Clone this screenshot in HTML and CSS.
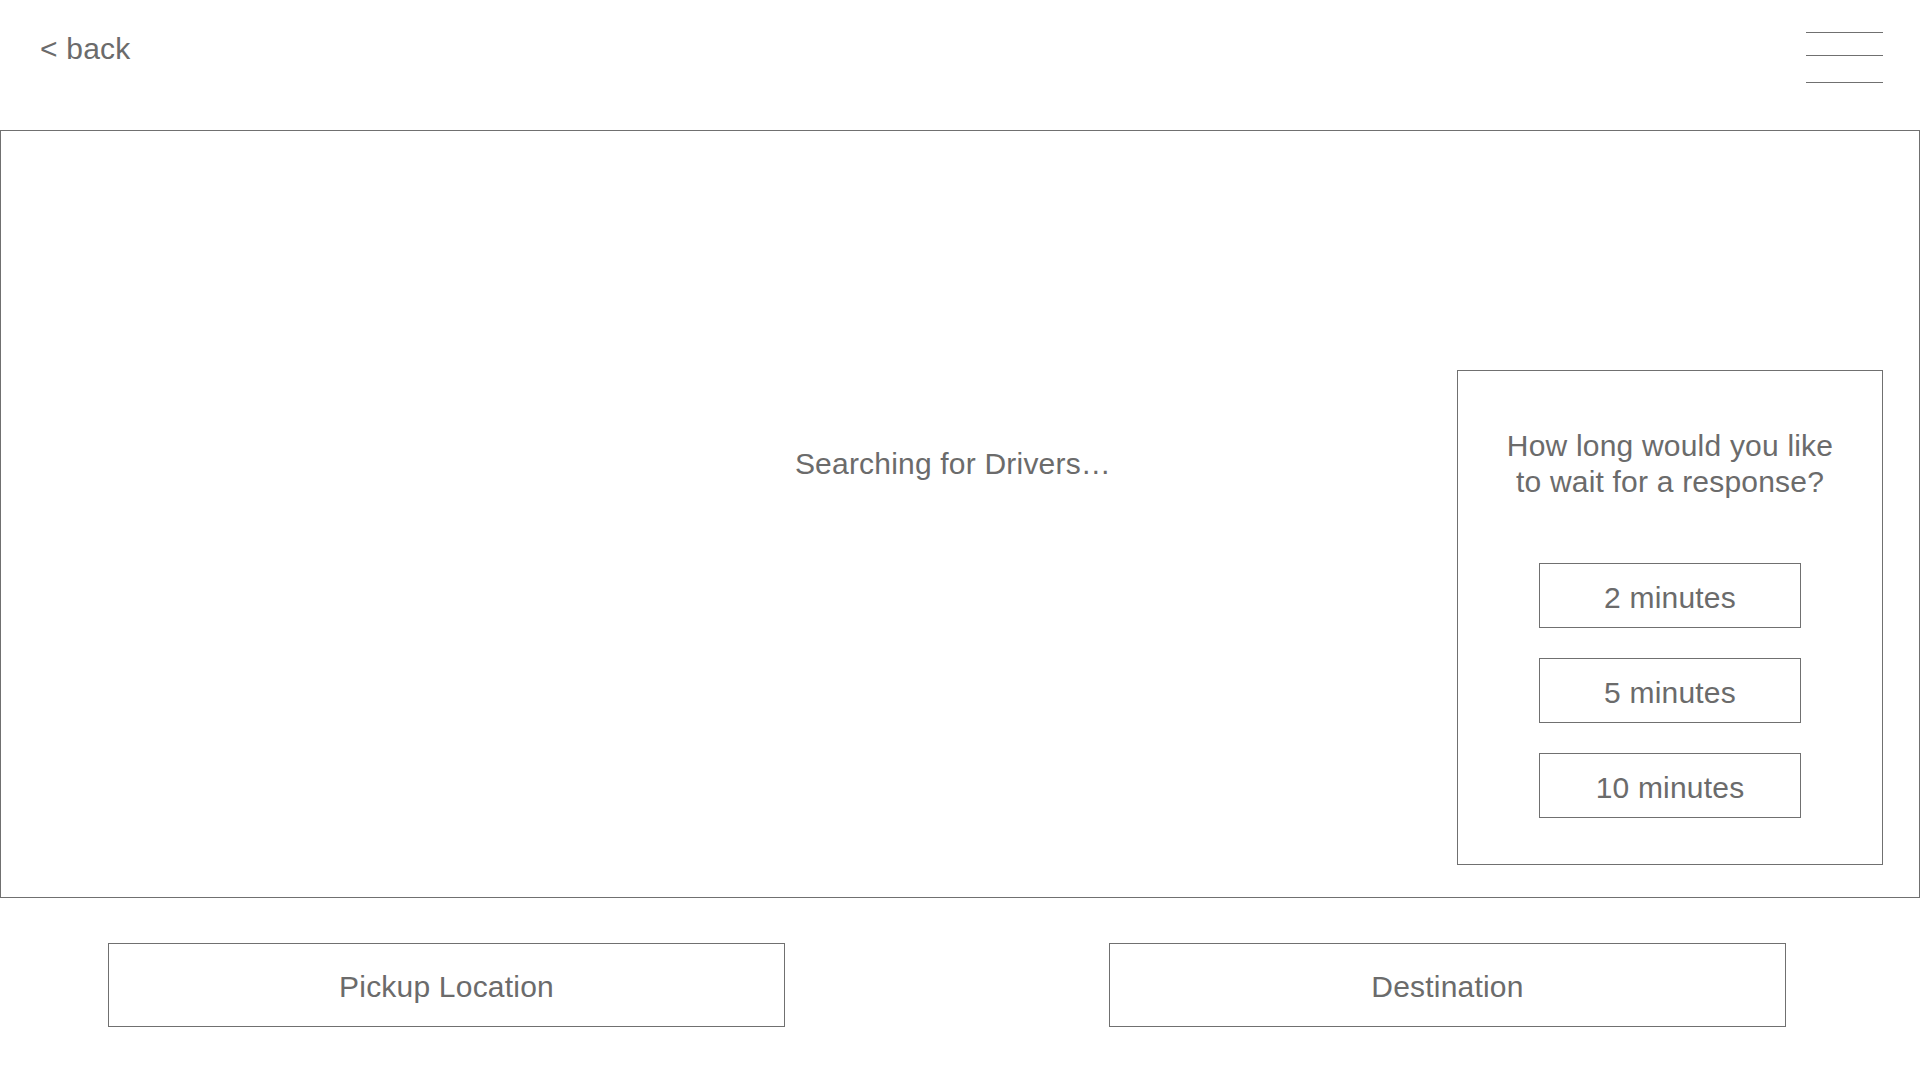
FILE: index.html
```html
<!DOCTYPE html>
<html lang="en">
<head>
<meta charset="utf-8">
<title>Searching for Drivers</title>
<link rel="stylesheet" href="styles.css">
</head>
<body>
  <header class="topbar">
    <a class="back" href="#">&lt; back</a>
    <div class="menu" aria-label="menu">
      <span class="menu-line"></span>
      <span class="menu-line"></span>
      <span class="menu-line"></span>
    </div>
  </header>

  <main class="stage">
    <p class="status">Searching for Drivers…</p>
    <section class="wait-card">
      <p class="wait-question">How long would you like<br>to wait for a response?</p>
      <div class="wait-options">
        <button class="option">2 minutes</button>
        <button class="option">5 minutes</button>
        <button class="option">10 minutes</button>
      </div>
    </section>
  </main>

  <footer class="locations">
    <button class="location">Pickup Location</button>
    <button class="location dest">Destination</button>
  </footer>
</body>
</html>
```

FILE: styles.css
```css
* {
  box-sizing: border-box;
}

html, body {
  margin: 0;
  padding: 0;
  background: #ffffff;
}

body {
  width: 1920px;
  height: 1080px;
  font-family: "Liberation Sans", Arial, Helvetica, sans-serif;
  color: #6b6b6b;
  font-size: 30px;
  letter-spacing: 0.2px;
}

.topbar {
  height: 130px;
  display: flex;
  justify-content: space-between;
  align-items: flex-start;
  padding: 0 37px 0 40px;
}

.back {
  color: #6b6b6b;
  text-decoration: none;
  font-size: 30px;
  line-height: 36px;
  margin-top: 31px;
}

.menu {
  width: 77px;
  margin-top: 32px;
  display: flex;
  flex-direction: column;
}

.menu-line {
  display: block;
  height: 1px;
  background: #707070;
}

.menu-line:nth-child(2) {
  margin-top: 22px;
}

.menu-line:nth-child(3) {
  margin-top: 26px;
}

.stage {
  height: 768px;
  border: 1px solid #707070;
  display: grid;
  grid-template-columns: 1fr;
  grid-template-rows: 1fr;
}

.stage > * {
  grid-area: 1 / 1;
}

.status {
  margin: 315px 0 0 0;
  justify-self: center;
  align-self: start;
  line-height: 36px;
  padding-right: 14px;
}

.wait-card {
  justify-self: end;
  align-self: end;
  width: 426px;
  height: 495px;
  margin: 0 36px 32px 0;
  border: 1px solid #707070;
  display: flex;
  flex-direction: column;
  align-items: center;
  padding-top: 57px;
}

.wait-question {
  margin: 0;
  text-align: center;
  line-height: 36px;
}

.wait-options {
  margin-top: 63px;
  display: flex;
  flex-direction: column;
  gap: 30px;
}

.option,
.location {
  font-family: "Liberation Sans", Arial, Helvetica, sans-serif;
  font-size: 30px;
  letter-spacing: 0.2px;
  color: #6b6b6b;
  background: #ffffff;
  border: 1px solid #707070;
  border-radius: 0;
  padding: 0;
  cursor: pointer;
}

.option {
  width: 262px;
  height: 65px;
  line-height: 36px;
  padding-top: 4px;
}

.locations {
  display: flex;
  padding: 45px 0 0 108px;
  gap: 324px;
}

.location {
  width: 677px;
  height: 84px;
  padding-top: 4px;
}
```
